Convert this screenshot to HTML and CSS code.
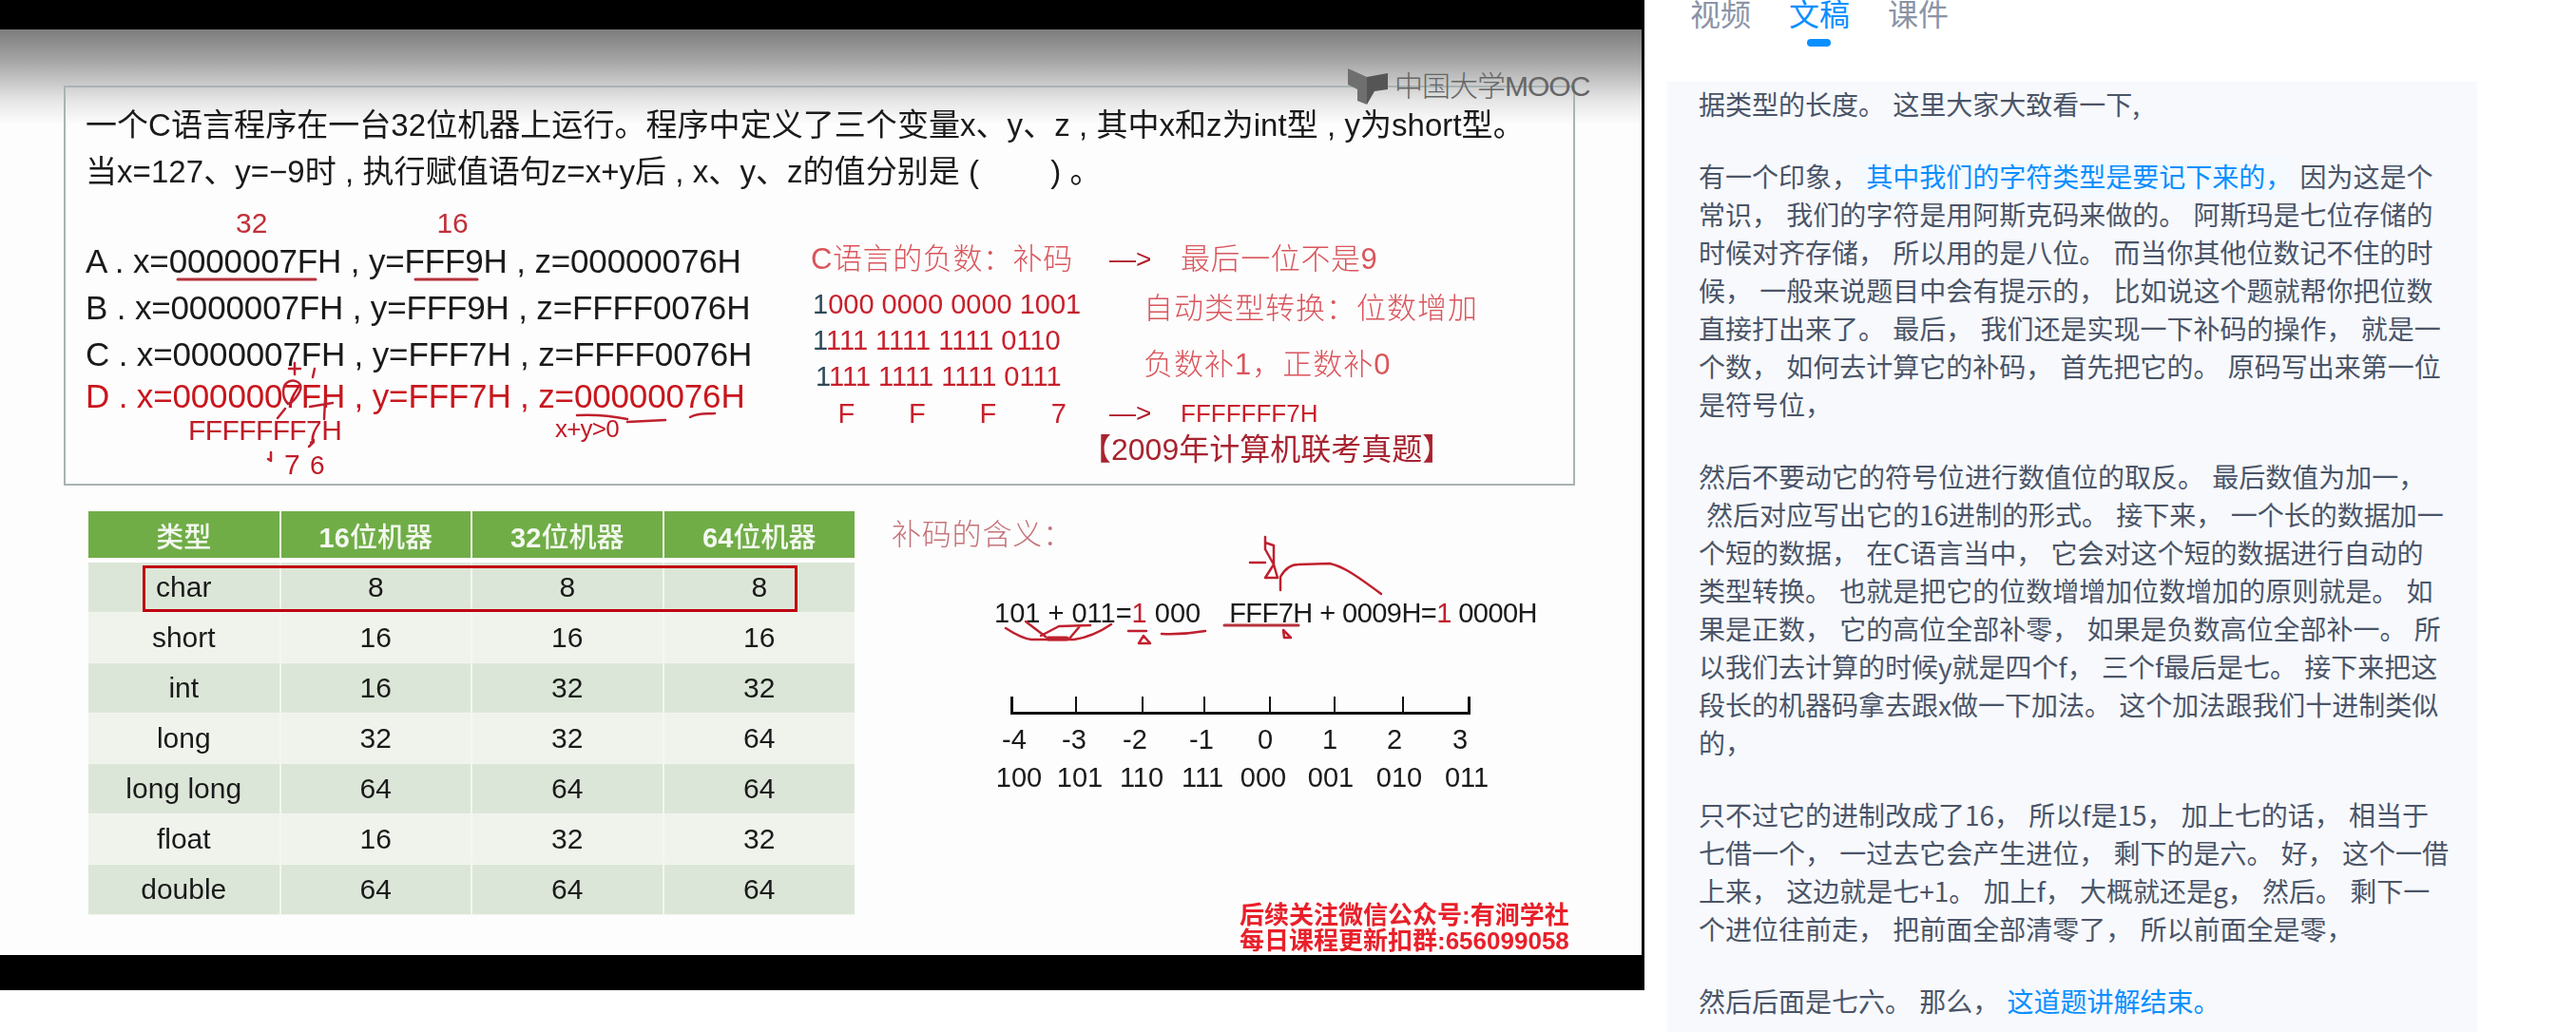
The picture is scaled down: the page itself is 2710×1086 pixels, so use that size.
FILE: index.html
```html
<!DOCTYPE html>
<html lang="zh">
<head>
  <meta charset="UTF-8">
  <title>文稿</title>
  <link rel="stylesheet" href="styles.css">
</head>
<body>

<div class="page">
  <div class="video">
    <div class="slide">

      <div class="qbox">
        <p class="question">一个C语言程序在一台32位机器上运行。程序中定义了三个变量x、y、z , 其中x和z为int型 , y为short型。<br>当x=127、y=−9时 , 执行赋值语句z=x+y后 , x、y、z的值分别是 (　　 ) 。</p>
        <div class="qcols">
          <div class="opts">
            <div class="marks"><span class="mark-32">32</span><span class="mark-16">16</span></div>
            <div class="opt">A . x=0000007FH , y=FFF9H , z=00000076H</div>
            <div class="opt">B . x=0000007FH , y=FFF9H , z=FFFF0076H</div>
            <div class="opt">C . x=0000007FH , y=FFF7H , z=FFFF0076H</div>
            <div class="opt opt-d">D . x=0000007FH , y=FFF7H , z=00000076H</div>
          </div>
          <div class="work">
            <div class="work-row work-first">
              <span class="thin">C语言的负数：补码</span><span class="arrow">—&gt;</span><span class="thin">最后一位不是9</span>
            </div>
            <div class="work-mid">
              <div class="bins">
                <div class="bin"><span class="bin-a">1</span>000 0000 0000 1001</div>
                <div class="bin"><span class="bin-a">1</span>111 1111 1111 0110</div>
                <div class="bin bin-last"><span class="bin-a">1</span>111 1111 1111 0111</div>
              </div>
              <div class="hints">
                <div class="thin">自动类型转换：位数增加</div>
                <div class="thin">负数补1，正数补0</div>
              </div>
            </div>
            <div class="work-row">
              <div class="hex"><span>F</span><span>F</span><span>F</span><span>7</span></div><span class="arrow">—&gt;</span><span class="hex-long">FFFFFFF7H</span>
            </div>
            <div class="source">【2009年计算机联考真题】</div>
          </div>
        </div>
      </div>

      <div class="lower">
        <div class="table-wrap">
          <table class="sizes">
            <tr><th class="th-type">类型</th><th><b>16</b>位机器</th><th><b>32</b>位机器</th><th><b>64</b>位机器</th></tr>
            <tr><td>char</td><td>8</td><td>8</td><td>8</td></tr>
            <tr><td>short</td><td>16</td><td>16</td><td>16</td></tr>
            <tr><td>int</td><td>16</td><td>32</td><td>32</td></tr>
            <tr><td>long</td><td>32</td><td>32</td><td>64</td></tr>
            <tr><td>long long</td><td>64</td><td>64</td><td>64</td></tr>
            <tr><td>float</td><td>16</td><td>32</td><td>32</td></tr>
            <tr><td>double</td><td>64</td><td>64</td><td>64</td></tr>
          </table>
          <div class="char-box"></div>
        </div>

        <div class="meaning">
          <div class="meaning-title">补码的含义：</div>
          <div class="equation">
            <span class="eq-left">101 + 011=<i>1</i> 000</span><span class="eq-right">FFF7H + 0009H=<i>1</i> 0000H</span>
          </div>
          <div class="ruler"><span></span><span></span><span></span><span></span><span></span><span></span><span></span></div>
          <div class="nums">
            <span>-4</span><span>-3</span><span>-2</span><span>-1</span><span>0</span><span>1</span><span>2</span><span>3</span>
          </div>
          <div class="codes">
            <span>100</span><span>101</span><span>110</span><span>111</span><span>000</span><span>001</span><span>010</span><span>011</span>
          </div>
          <div class="promo">后续关注微信公众号:有涧学社<br>每日课程更新扣群:656099058</div>
        </div>
      </div>
    </div>

    <!-- watermark and pen marks sit on top of the slide -->
    <div class="logo">
      <svg class="logo-mark" viewBox="0 0 42 38" width="42" height="38"><path d="M0 0 L20 9 L20 38 L10 34 L10 22 L0 17 Z" fill="#6f6f6f"/><path d="M20 9 L42 5 L42 22 L28 24 L20 38 Z" fill="#555"/></svg>
      <span>中国大学MOOC</span>
    </div>
    <div class="pen pen-f7">FFFFFFF7H</div>
    <div class="pen pen-7">7</div>
    <div class="pen pen-6">6</div>
    <div class="pen pen-xy">x+y&gt;0</div>
    <svg class="marks-layer" viewBox="0 0 1730 1042" width="1730" height="1042" fill="none" stroke="#c0202e" stroke-width="2.5" stroke-linecap="round" stroke-linejoin="round">
      <path stroke="#b5323c" stroke-width="3" d="M187 294 H332 M437 294 H502"/>
      <path d="M310 382 V394 M304 388 H316 M331 388 L329 397"/>
      <path d="M305 401 C296 404 296 418 303 425 C311 422 318 410 316 405 C314 401 309 400 305 401 Z"/>
      <path d="M300 430 L292 440 M326 428 L350 424 M342 422 L341 441 M327 466 L330 463 M325 470 L330 465 M285 476 V485 L282 483"/>
      <path d="M607 437 C625 436 645 438 660 441 M660 444 L700 442 M726 439 C735 434 745 436 752 435"/>
      <path d="M1058 661 Q1075 672 1085 673 L1130 673 Q1150 670 1169 657 M1079 654 L1100 670 M1095 669 L1114 659 L1147 658 M1136 659 L1125 672"/>
      <path stroke-width="5" d="M1103 672 H1122"/>
      <path d="M1187 664 H1206 M1198 677 L1203 669 L1210 677 Z M1222 667 Q1245 668 1268 664"/>
      <path stroke="#b5323c" stroke-width="3" d="M1288 658 H1366"/>
      <path d="M1351 671 L1350 663 L1358 671 Z"/>
      <path d="M1315 592 H1331 M1331 565 V578 M1331 571 L1340 574 L1340 594 L1344 608 L1331 608 L1340 594 L1331 578 M1347 621 V607 C1352 598 1358 594 1366 594 L1399 593 C1412 596 1422 602 1453 625"/>
    </svg>
  </div>

  <div class="side">
    <div class="tabs">
      <div class="tab">视频</div>
      <div class="tab tab-on">文稿</div>
      <div class="tab">课件</div>
    </div>
    <div class="notes">
      <p>据类型的长度。 这里大家大致看一下,</p>
      <p>有一个印象，<span class="hl"> 其中我们的字符类型是要记下来的，</span> 因为这是个<br>
        常识， 我们的字符是用阿斯克码来做的。 阿斯玛是七位存储的<br>
        时候对齐存储， 所以用的是八位。 而当你其他位数记不住的时<br>
        候， 一般来说题目中会有提示的， 比如说这个题就帮你把位数<br>
        直接打出来了。 最后， 我们还是实现一下补码的操作， 就是一<br>
        个数， 如何去计算它的补码， 首先把它的。 原码写出来第一位<br>
        是符号位，</p>
      <p>然后不要动它的符号位进行数值位的取反。 最后数值为加一，<br>
        <span class="nudge">然后对应写出它的16进制的形式。 接下来， 一个长的数据加一</span><br>
        个短的数据， 在C语言当中， 它会对这个短的数据进行自动的<br>
        类型转换。 也就是把它的位数增增加位数增加的原则就是。 如<br>
        果是正数， 它的高位全部补零， 如果是负数高位全部补一。 所<br>
        以我们去计算的时候y就是四个f， 三个f最后是七。 接下来把这<br>
        段长的机器码拿去跟x做一下加法。 这个加法跟我们十进制类似<br>
        的，</p>
      <p>只不过它的进制改成了16， 所以f是15， 加上七的话， 相当于<br>
        七借一个， 一过去它会产生进位， 剩下的是六。 好， 这个一借<br>
        上来， 这边就是七+1。 加上f， 大概就还是g， 然后。 剩下一<br>
        个进位往前走， 把前面全部清零了， 所以前面全是零，</p>
      <p>然后后面是七六。 那么， <span class="blue">这道题讲解结束。</span></p>
    </div>
  </div>
</div>

</body>
</html>
```

FILE: styles.css
```css
html, body {
  margin: 0;
  height: 1086px;
  overflow: hidden;
  background: #fff;
}
body {
  font-family: "Liberation Sans", "Noto Sans CJK SC", sans-serif;
}
p {
  margin: 0;
}
.page {
  display: flex;
  height: 1086px;
}

/* video frame */
.video {
  position: relative;
  box-sizing: border-box;
  width: 1730px;
  height: 1042px;
  padding: 31px 3px 37px 0;
  background: #000;
  flex: none;
}
.slide {
  box-sizing: border-box;
  height: 974px;
  padding: 59px 0 0 67px;
  background: linear-gradient(#7c7c7c 0, #a8a8a8 35px, #e6e6e6 75px, #fdfdfd 100px);
  color: #1a1a1a;
  filter: blur(0.5px);
}
.qbox {
  box-sizing: border-box;
  width: 1590px;
  height: 421px;
  padding-top: 15px;
  padding-left: 21px;
  border: 2px solid #a9b3b3;
}
.question {
  font-size: 33px;
  line-height: 49px;
  letter-spacing: 0.05px;
  white-space: nowrap;
}
.qcols {
  display: flex;
}
.opts {
  width: 763px;
  flex: none;
}
.marks {
  height: 45px;
  padding-top: 14px;
  box-sizing: border-box;
  font-size: 30px;
  line-height: 31px;
  color: #c0303a;
}
.mark-32 {
  margin-left: 158px;
}
.mark-16 {
  margin-left: 178px;
}
.opt {
  font-size: 35px;
  line-height: 49px;
  letter-spacing: -0.15px;
  white-space: nowrap;
}
.opt-d {
  margin-top: -5px;
  color: #c8161d;
}

/* red working on the right of the question */
.work {
  color: #c8202c;
}
.thin {
  font-size: 31px;
  color: #d9555c;
  font-weight: 300;
  letter-spacing: 0.6px;
}
.work-row {
  display: grid;
  grid-template-columns: 314px 75px 1fr;
  line-height: 40px;
  align-items: center;
}
.work-first {
  padding-top: 48px;
}
.arrow {
  font-size: 28px;
  color: #b01c2a;
}
.work-mid {
  display: flex;
  padding-top: 8px;
}
.bins {
  width: 350px;
  padding-left: 2px;
  box-sizing: border-box;
}
.bin {
  font-size: 29px;
  line-height: 38px;
  white-space: nowrap;
}
.bin-a {
  color: #2f4a5a;
}
.bin-last {
  padding-left: 3px;
}
.hints {
  display: flex;
  flex-direction: column;
  gap: 19px;
  padding-top: 4px;
  line-height: 40px;
}
.hints .thin {
  letter-spacing: 1px;
}
.hex {
  display: flex;
  font-size: 29px;
}
.hex span {
  width: 74.5px;
  text-align: center;
}
.hex-long {
  font-size: 26px;
}
.source {
  margin-left: 284px;
  font-size: 32px;
  line-height: 36px;
  color: #a82330;
  white-space: nowrap;
}

/* lower half */
.lower {
  display: flex;
  margin-top: 27px;
  margin-left: 26px;
  height: 467px;
}
.table-wrap {
  position: relative;
  width: 806px;
  flex: none;
}
.sizes {
  width: 806px;
  table-layout: fixed;
  border-collapse: collapse;
  font-size: 30px;
  text-align: center;
  color: #1a1a1a;
}
.sizes th {
  height: 49px;
  padding: 0;
  background: #70ad47;
  border-right: 2px solid #f2f7ee;
  border-bottom: 5px solid #fff;
  color: #f4f9f0;
  font-weight: 500;
  font-size: 29px;
}
.sizes th:last-child,
.sizes td:last-child {
  border-right: none;
}
.sizes b {
  font-weight: 700;
}
.th-type {
  font-size: 32px;
}
.sizes td {
  height: 52px;
  padding: 0;
  background: #dce6d8;
  border-right: 2px solid #f2f7ee;
  border-bottom: 1px solid #f2f7ee;
}
.sizes tr:nth-child(odd) td {
  background: #eff3ec;
}
.char-box {
  position: absolute;
  left: 57px;
  top: 57px;
  width: 689px;
  height: 49px;
  box-sizing: border-box;
  border: 3px solid #c00010;
}
.meaning {
  display: flex;
  flex-direction: column;
  margin-left: 39px;
  flex: 1;
}
.meaning-title {
  font-size: 31px;
  line-height: 50px;
  letter-spacing: 0.8px;
  color: #c4747a;
  font-weight: 300;
}
.equation {
  display: flex;
  margin-top: 35px;
  padding-left: 108px;
  font-size: 29px;
  line-height: 44px;
  white-space: nowrap;
}
.equation i {
  font-style: normal;
  color: #c0202e;
}
.eq-right {
  margin-left: 30px;
  letter-spacing: -0.55px;
}
.ruler {
  display: flex;
  box-sizing: border-box;
  width: 484px;
  height: 19px;
  margin-top: 66px;
  margin-left: 125px;
  border-bottom: 3px solid #111;
  border-right: 3px solid #111;
}
.ruler span {
  box-sizing: border-box;
  width: 68px;
  border-left: 2px solid #111;
}
.ruler span:first-child {
  border-left-width: 3px;
}
.ruler span:nth-child(2) {
  width: 70px;
}
.ruler span:nth-child(3) {
  width: 65px;
}
.ruler span:nth-child(4) {
  width: 69px;
}
.ruler span:nth-child(6) {
  width: 72px;
}
.ruler span:nth-child(7) {
  width: 69px;
}
.nums,
.codes {
  display: grid;
  margin-left: 102px;
  font-size: 29px;
  line-height: 40px;
  text-align: center;
}
.nums {
  margin-top: 6px;
  grid-template-columns: 54px 72px 56px 84px 50px 86px 50px 88px;
}
.codes {
  grid-template-columns: 64px 64px 66px 62px 66px 76px 68px 74px;
}
.promo {
  margin-top: auto;
  margin-left: 366px;
  padding-bottom: 1px;
  font-size: 26px;
  line-height: 27px;
  font-weight: 700;
  color: #e8202a;
  white-space: nowrap;
}

/* over the slide */
.logo {
  position: absolute;
  left: 1418px;
  top: 72px;
  display: flex;
  align-items: center;
  gap: 7px;
  font-size: 30px;
  line-height: 38px;
  letter-spacing: -1px;
  color: #666;
  font-weight: 300;
  white-space: nowrap;
}
.logo-mark {
  flex: none;
}
.pen {
  position: absolute;
  color: #c01c28;
  filter: blur(0.4px);
  white-space: nowrap;
}
.pen-f7 {
  left: 198px;
  top: 433px;
  font-size: 30px;
  line-height: 40px;
  letter-spacing: -0.6px;
}
.pen-7 {
  left: 299px;
  top: 474px;
  font-size: 30px;
  line-height: 30px;
}
.pen-6 {
  left: 326px;
  top: 476px;
  font-size: 28px;
  line-height: 28px;
}
.pen-xy {
  left: 584px;
  top: 436px;
  font-size: 26px;
  line-height: 30px;
  letter-spacing: -0.8px;
}
.marks-layer {
  position: absolute;
  left: 0;
  top: 0;
  filter: blur(0.4px);
}

/* transcript column */
.side {
  display: flex;
  flex-direction: column;
  width: 852px;
  margin-left: 24px;
  font-family: "Noto Sans CJK SC", "Noto Sans", sans-serif;
}
.tabs {
  display: flex;
  flex: none;
  gap: 40px;
  height: 89px;
  margin-top: -3px;
  padding-left: 24px;
  font-size: 32px;
  line-height: 32px;
  color: #8a94a6;
}
.tab {
  position: relative;
}
.tab-on {
  color: #0a8fff;
}
.tab-on::after {
  content: "";
  position: absolute;
  left: 19px;
  top: 44px;
  width: 25px;
  height: 8px;
  border-radius: 4px;
  background: #0a8fff;
}
.notes {
  flex: 1;
  min-height: 0;
  overflow: hidden;
  padding: 3px 0 0 33px;
  background: #f7f9fd;
  font-size: 28px;
  line-height: 40px;
  color: #4b5568;
  word-spacing: 2px;
  white-space: nowrap;
}
.notes p {
  margin-bottom: 36px;
}
.hl {
  background: #f4faff;
  color: #0a8fff;
}
.blue {
  color: #0a8fff;
}
.nudge {
  padding-left: 8px;
}
```
